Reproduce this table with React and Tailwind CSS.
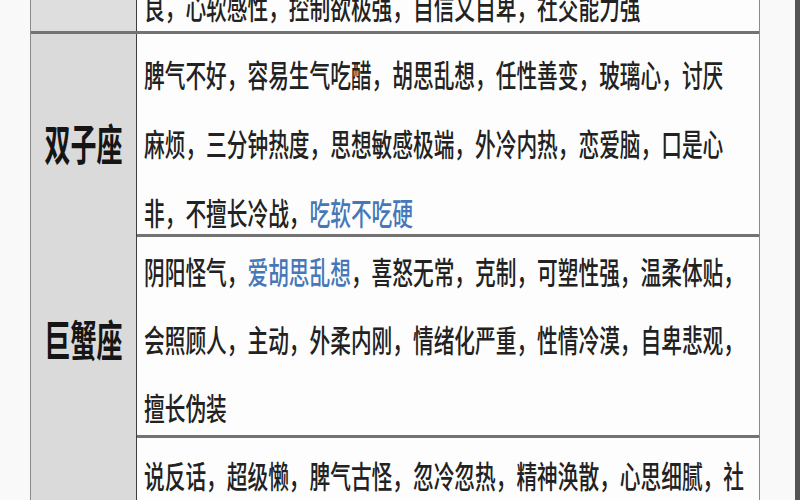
import React from 'react'

const font = { fontFamily: '"Noto Sans CJK SC", "Noto Sans", sans-serif' }

function Line({ children, h = 'h-[69px]' }) {
  return (
    <div className={`${h} flex items-center`}>
      <span className="inline-block origin-center scale-y-[1.5] whitespace-nowrap text-[20.7px] font-medium leading-none text-[#222]">
        {children}
      </span>
    </div>
  )
}

function Blue({ children }) {
  return <span className="text-[#4677b8]">{children}</span>
}

function Label({ children }) {
  return (
    <span className="inline-block origin-center scale-y-[1.65] whitespace-nowrap text-[26px] font-bold leading-none text-[#151515]">
      {children}
    </span>
  )
}

export default function App() {
  return (
    <div className="flex h-[500px] w-[800px] overflow-hidden bg-[#f9f9f9]" style={font}>
      <div className="w-[30px] shrink-0" />
      <div className="flex w-[730px] shrink-0 flex-col border-x border-[#8a8a8a] bg-[#fdfdfd]">
        {/* top row, mostly cut off */}
        <div className="grid h-[34px] shrink-0 grid-cols-[106px_1fr] overflow-hidden border-b-[3px] border-[#737373]">
          <div className="border-r-[1.5px] border-[#3d3d3d] bg-[#dedede]" />
          <div className="pl-[7px]">
            <div className="mt-[-28px]">
              <Line>良，心软感性，控制欲极强，自信又自卑，社交能力强</Line>
            </div>
          </div>
        </div>

        {/* 双子座 */}
        <div className="grid h-[203px] shrink-0 grid-cols-[106px_1fr] border-b-[3px] border-[#737373]">
          <div className="flex items-center justify-center border-r-[1.5px] border-[#3d3d3d] bg-[#dadada] pt-[4px]">
            <Label>双子座</Label>
          </div>
          <div className="pl-[7px] pt-[6px]">
            <Line>脾气不好，容易生气吃醋，胡思乱想，任性善变，玻璃心，讨厌</Line>
            <Line>麻烦，三分钟热度，思想敏感极端，外冷内热，恋爱脑，口是心</Line>
            <Line>
              非，不擅长冷战，<Blue>吃软不吃硬</Blue>
            </Line>
          </div>
        </div>

        {/* 巨蟹座 */}
        <div className="grid h-[201px] shrink-0 grid-cols-[106px_1fr] border-b-[3px] border-[#737373]">
          <div className="flex items-center justify-center border-r-[1.5px] border-[#3d3d3d] bg-[#dadada]">
            <Label>巨蟹座</Label>
          </div>
          <div className="pl-[7px]">
            <Line h="h-[68px]">
              阴阳怪气，<Blue>爱胡思乱想</Blue>，喜怒无常，克制，可塑性强，温柔体贴，
            </Line>
            <Line h="h-[68px]">会照顾人，主动，外柔内刚，情绪化严重，性情冷漠，自卑悲观，</Line>
            <Line h="h-[68px]">擅长伪装</Line>
          </div>
        </div>

        {/* 狮子座 */}
        <div className="grid h-[200px] shrink-0 grid-cols-[106px_1fr]">
          <div className="flex items-center justify-center border-r-[1.5px] border-[#3d3d3d] bg-[#dadada]">
            <Label>狮子座</Label>
          </div>
          <div className="pl-[7px] pt-[3px]">
            <Line h="h-[68px]">说反话，超级懒，脾气古怪，忽冷忽热，精神涣散，心思细腻，社</Line>
            <Line h="h-[68px]">交能力强</Line>
          </div>
        </div>
      </div>
      <div className="flex-1" />
      <div className="w-[5px] shrink-0 bg-[#555]" />
    </div>
  )
}
